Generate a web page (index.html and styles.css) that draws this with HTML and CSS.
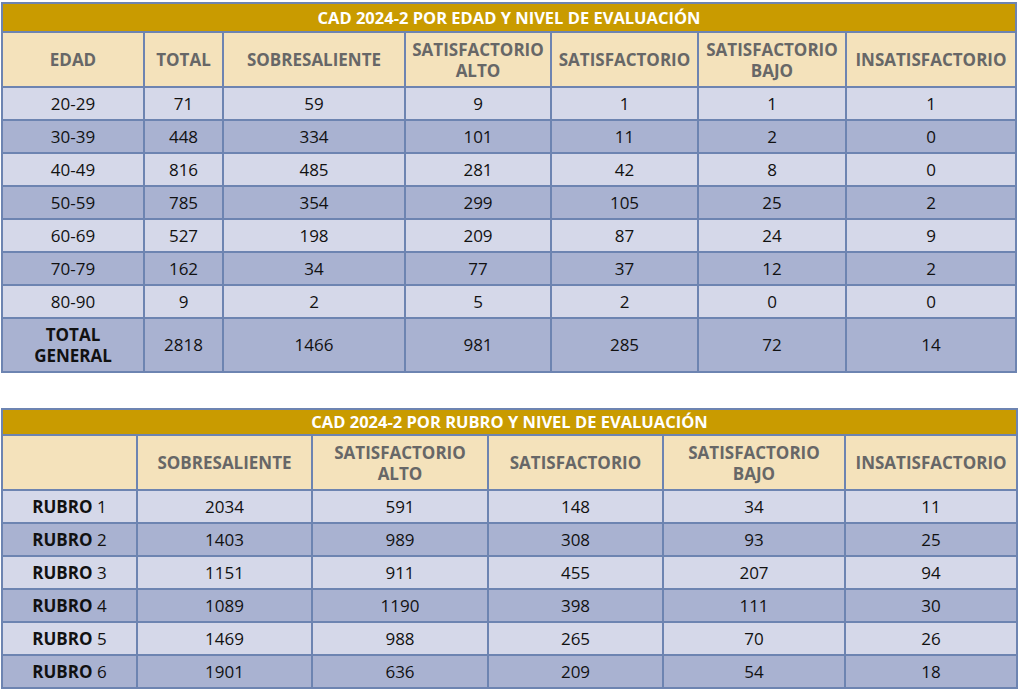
FILE: index.html
```html
<!DOCTYPE html>
<html lang="es">
<head>
<meta charset="utf-8">
<link rel="stylesheet" href="styles.css">
</head>
<body>
<div class="page">
<table class="grid grid-edad">
  <colgroup>
    <col style="width:142px"><col style="width:79px"><col style="width:182px"><col style="width:146px"><col style="width:147px"><col style="width:148px"><col style="width:170px">
  </colgroup>
  <thead>
    <tr class="title"><th colspan="7">CAD 2024-2 POR EDAD Y NIVEL DE EVALUACIÓN</th></tr>
    <tr class="head">
      <th>EDAD</th><th>TOTAL</th><th>SOBRESALIENTE</th><th>SATISFACTORIO<br>ALTO</th><th>SATISFACTORIO</th><th>SATISFACTORIO<br>BAJO</th><th>INSATISFACTORIO</th>
    </tr>
  </thead>
  <tbody>
    <tr class="light"><td>20-29</td><td>71</td><td>59</td><td>9</td><td>1</td><td>1</td><td>1</td></tr>
    <tr class="dark"><td>30-39</td><td>448</td><td>334</td><td>101</td><td>11</td><td>2</td><td>0</td></tr>
    <tr class="light"><td>40-49</td><td>816</td><td>485</td><td>281</td><td>42</td><td>8</td><td>0</td></tr>
    <tr class="dark"><td>50-59</td><td>785</td><td>354</td><td>299</td><td>105</td><td>25</td><td>2</td></tr>
    <tr class="light"><td>60-69</td><td>527</td><td>198</td><td>209</td><td>87</td><td>24</td><td>9</td></tr>
    <tr class="dark"><td>70-79</td><td>162</td><td>34</td><td>77</td><td>37</td><td>12</td><td>2</td></tr>
    <tr class="light"><td>80-90</td><td>9</td><td>2</td><td>5</td><td>2</td><td>0</td><td>0</td></tr>
    <tr class="dark total"><td class="label">TOTAL<br>GENERAL</td><td>2818</td><td>1466</td><td>981</td><td>285</td><td>72</td><td>14</td></tr>
  </tbody>
</table>

<table class="grid grid-rubro">
  <colgroup>
    <col style="width:135px"><col style="width:175px"><col style="width:176px"><col style="width:175px"><col style="width:182px"><col style="width:172px">
  </colgroup>
  <thead>
    <tr class="title"><th colspan="6">CAD 2024-2 POR RUBRO Y NIVEL DE EVALUACIÓN</th></tr>
    <tr class="head">
      <th></th><th>SOBRESALIENTE</th><th>SATISFACTORIO<br>ALTO</th><th>SATISFACTORIO</th><th>SATISFACTORIO<br>BAJO</th><th>INSATISFACTORIO</th>
    </tr>
  </thead>
  <tbody>
    <tr class="light"><td><b>RUBRO</b> 1</td><td>2034</td><td>591</td><td>148</td><td>34</td><td>11</td></tr>
    <tr class="dark"><td><b>RUBRO</b> 2</td><td>1403</td><td>989</td><td>308</td><td>93</td><td>25</td></tr>
    <tr class="light"><td><b>RUBRO</b> 3</td><td>1151</td><td>911</td><td>455</td><td>207</td><td>94</td></tr>
    <tr class="dark"><td><b>RUBRO</b> 4</td><td>1089</td><td>1190</td><td>398</td><td>111</td><td>30</td></tr>
    <tr class="light"><td><b>RUBRO</b> 5</td><td>1469</td><td>988</td><td>265</td><td>70</td><td>26</td></tr>
    <tr class="dark"><td><b>RUBRO</b> 6</td><td>1901</td><td>636</td><td>209</td><td>54</td><td>18</td></tr>
  </tbody>
</table>
</div>
</body>
</html>
```
FILE: styles.css
```css
html, body {
  margin: 0;
  padding: 0;
  background: #ffffff;
}
.page {
  padding: 2px 0 0 1px;
  display: flex;
  flex-direction: column;
  gap: 35px;
  font-family: "Open Sans", "Noto Sans", sans-serif;
}
.grid {
  border-collapse: collapse;
  table-layout: fixed;
}
.grid-edad { width: 1014px; }
.grid-rubro { width: 1015px; }
.grid th, .grid td {
  border: 2px solid #6d84b1;
  padding: 0;
  text-align: center;
  vertical-align: middle;
}
.title th {
  background: #c99b00;
  color: #ffffff;
  font-size: 16.5px;
  font-weight: 700;
  height: 27px;
  line-height: 20px;
}
.grid-rubro .title th {
  height: 24px;
}
.head th {
  background: #f4e2bb;
  color: #676767;
  font-size: 17px;
  font-weight: 700;
  line-height: 21px;
  height: 53px;
}
.grid-rubro .head th {
  height: 53px;
}
.grid td {
  color: #111111;
  font-size: 17px;
  height: 31px;
  line-height: 20px;
}
.light td { background: #d5d8e9; }
.dark td { background: #a9b2d1; }
.total td { height: 52px; }
.total .label {
  font-weight: 700;
  line-height: 21px;
}
.grid td b { font-weight: 700; }
```
